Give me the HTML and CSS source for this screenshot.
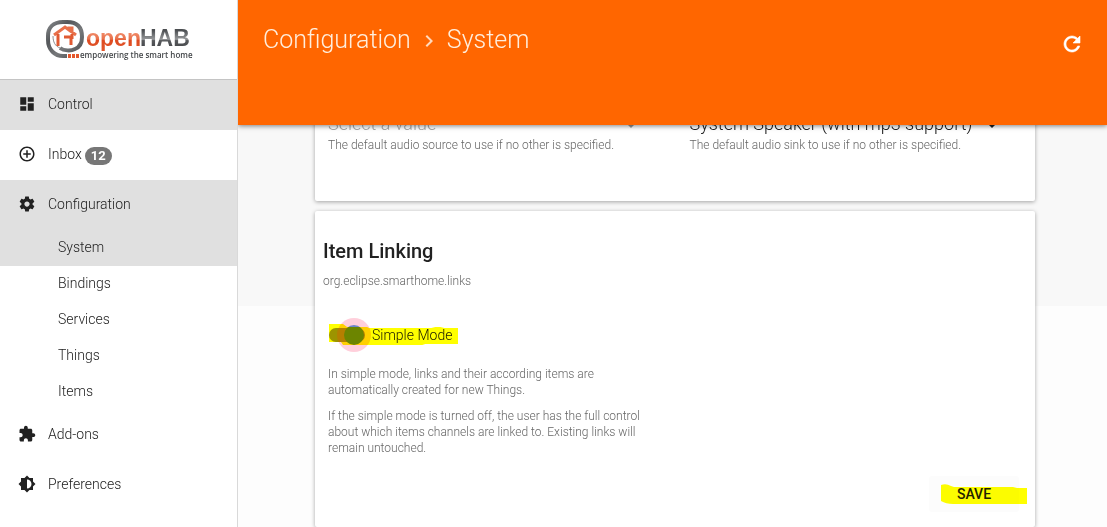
FILE: index.html
```html
<!DOCTYPE html>
<html lang="en">
<head>
<meta charset="utf-8">
<meta name="viewport" content="width=device-width, initial-scale=1">
<title>openHAB - Configuration</title>
<link rel="stylesheet" href="styles.css">
</head>
<body>
<div class="app">
  <aside class="sidebar">
    <a class="brand" href="#" aria-label="openHAB home">
      <svg class="brand-logo" viewBox="0 0 146 42" role="img" aria-label="openHAB">
        <defs>
          <linearGradient id="orange" x1="0" y1="0" x2="0" y2="1">
            <stop offset="0.3" stop-color="#f08a68"/><stop offset="0.55" stop-color="#e8704a"/><stop offset="0.58" stop-color="#de4a20"/><stop offset="1" stop-color="#e2572c"/>
          </linearGradient>
          <linearGradient id="grey" x1="0" y1="0" x2="0" y2="1">
            <stop offset="0.2" stop-color="#4b4e51"/><stop offset="0.55" stop-color="#96989a"/><stop offset="0.6" stop-color="#57595c"/><stop offset="1" stop-color="#3d4043"/>
          </linearGradient>
          <linearGradient id="ring" x1="0" y1="0" x2="1" y2="1">
            <stop offset="0" stop-color="#85888a"/><stop offset="0.3" stop-color="#54575a"/><stop offset="0.6" stop-color="#77797b"/><stop offset="1" stop-color="#4a4d50"/>
          </linearGradient>
        </defs>
        <path d="M14 29C18 32 25 32 29 30C34 28 36 23 36 18C36 8 31 3 21 3H17C7 3 2 9 2 17V21C2 31 9 37 17 37H21" fill="none" stroke="url(#ring)" stroke-width="4"/>
        <path d="M7 17C7 23 9 27 14 29" fill="none" stroke="#8b8d8f" stroke-width="1"/>
        <path d="M8 16L19 8L23 11V9H26V13L30 16" fill="none" stroke="#e8704a" stroke-width="3"/>
        <path d="M12 15V27M26 15V20M18 18H25V26" fill="none" stroke="#e05a32" stroke-width="3"/>
        <path d="M22 35h3v4h-3zM26 35h3v4h-3zM30 35h3v4h-3z" fill="#e4572c"/>
        <text class="logo-name" x="40" y="27" fill="url(#orange)">open</text>
        <text class="logo-name" x="94" y="27" fill="url(#grey)">HAB</text>
        <text class="logo-tag" x="34" y="39">empowering the smart home</text>
      </svg>
    </a>
    <nav class="menu" aria-label="Main">
      <a class="item active" href="#"><svg class="icon" viewBox="0 0 24 24"><path d="M3 13h8V3H3v10zm0 8h8v-6H3v6zm10 0h8V11h-8v10zm0-18v6h8V3h-8z"/></svg>Control</a>
      <a class="item" href="#"><svg class="icon" viewBox="0 0 24 24"><path d="M13 7h-2v4H7v2h4v4h2v-4h4v-2h-4V7zm-1-5C6.480 2 2 6.480 2 12s4.480 10 10 10 10-4.480 10-10S17.520 2 12 2zm0 18c-4.410 0-8-3.590-8-8s3.590-8 8-8 8 3.590 8 8-3.590 8-8 8z"/></svg>Inbox<span class="badge">12</span></a>
      <a class="item active" href="#"><svg class="icon" viewBox="0 0 24 24"><path d="M19.430 12.980c.04-.32.07-.64.07-.98s-.03-.66-.07-.98l2.110-1.650c.19-.15.24-.42.12-.64l-2-3.460c-.12-.22-.39-.3-.61-.22l-2.490 1c-.52-.4-1.080-.73-1.690-.98l-.38-2.650C14.460 2.180 14.250 2 14 2h-4c-.25 0-.46.18-.49.42l-.38 2.650c-.61.25-1.170.59-1.690.98l-2.490-1c-.23-.09-.49 0-.61.22l-2 3.460c-.13.22-.07.49.12.64l2.110 1.650c-.04.32-.07.65-.07.98s.03.66.07.98l-2.110 1.650c-.19.15-.24.42-.12.64l2 3.460c.12.22.39.3.61.22l2.490-1c.52.4 1.080.73 1.690.98l.38 2.650c.03.24.24.42.49.42h4c.25 0 .46-.18.49-.42l.38-2.650c.61-.25 1.170-.59 1.690-.98l2.490 1c.23.09.49 0 .61-.22l2-3.460c.12-.22.07-.49-.12-.64l-2.110-1.650zM12 15.500c-1.930 0-3.500-1.570-3.500-3.500s1.570-3.500 3.500-3.500 3.500 1.570 3.500 3.500-1.570 3.500-3.500 3.500z"/></svg>Configuration</a>
      <a class="subitem active" href="#" aria-current="page">System</a>
      <a class="subitem" href="#">Bindings</a>
      <a class="subitem" href="#">Services</a>
      <a class="subitem" href="#">Things</a>
      <a class="subitem" href="#">Items</a>
      <a class="item" href="#"><svg class="icon" viewBox="0 0 24 24"><path d="M20.500 11H19V7c0-1.100-.9-2-2-2h-4V3.500C13 2.120 11.880 1 10.500 1S8 2.120 8 3.500V5H4c-1.100 0-1.990.9-1.990 2v3.800H3.500c1.490 0 2.700 1.210 2.700 2.700s-1.210 2.700-2.700 2.700H2V20c0 1.100.9 2 2 2h3.800v-1.500c0-1.490 1.210-2.700 2.700-2.700 1.490 0 2.700 1.210 2.700 2.700V22H17c1.100 0 2-.9 2-2v-4h1.500c1.380 0 2.500-1.120 2.500-2.500S21.880 11 20.500 11z"/></svg>Add-ons</a>
      <a class="item" href="#"><svg class="icon" viewBox="0 0 24 24"><path d="M20 8.690V4h-4.690L12 .69 8.690 4H4v4.690L.69 12 4 15.310V20h4.690L12 23.310 15.310 20H20v-4.690L23.310 12 20 8.690zM12 18V6c3.310 0 6 2.690 6 6s-2.690 6-6 6z"/></svg>Preferences</a>
    </nav>
  </aside>
  <div class="page">
    <header class="toolbar">
      <h1 class="crumbs"><a href="#">Configuration</a><svg class="chevron" viewBox="0 0 24 24"><path d="M10 6L8.590 7.410 13.170 12l-4.580 4.590L10 18l6-6z"/></svg><span>System</span></h1>
      <button class="refresh" type="button" aria-label="Refresh"><svg viewBox="0 0 24 24"><path d="M17.650 6.350C16.200 4.900 14.210 4 12 4c-4.420 0-7.990 3.580-7.990 8s3.570 8 7.990 8c3.730 0 6.840-2.550 7.730-6h-2.080c-.82 2.330-3.040 4-5.650 4-3.310 0-6-2.690-6-6s2.690-6 6-6c1.660 0 3.140.69 4.220 1.780L13 11h7V4l-2.350 2.350z"/></svg></button>
    </header>
    <main class="content">
      <section class="card audio">
        <div class="field">
          <div class="picker"><select class="select placeholder" aria-label="Default source"><option>Select a value</option></select><svg class="arrow placeholder" viewBox="0 0 10 5"><path d="M0 0h10L5 5z"/></svg></div>
          <p class="hint">The default audio source to use if no other is specified.</p>
        </div>
        <div class="field">
          <div class="picker"><select class="select" aria-label="Default sink"><option>System Speaker (with mp3 support)</option></select><svg class="arrow" viewBox="0 0 10 5"><path d="M0 0h10L5 5z"/></svg></div>
          <p class="hint">The default audio sink to use if no other is specified.</p>
        </div>
      </section>
      <section class="card linking">
        <h2 class="title">Item Linking</h2>
        <p class="hint">org.eclipse.smarthome.links</p>
        <div class="setting">
          <label class="toggle"><input class="switch" type="checkbox" checked>Simple Mode
            <svg class="marker" viewBox="0 0 129 22" preserveAspectRatio="none"><path d="M0 0H14L18 3H38L40 4H102L106 3H111L115 4H129V20H96L93 21H14L12 18H0z"/></svg>
          </label>
          <p class="hint">In simple mode, links and their according items are automatically created for new Things.</p>
          <p class="hint">If the simple mode is turned off, the user has the full control about which items channels are linked to. Existing links will remain untouched.</p>
        </div>
        <div class="actions">
          <button class="save" type="button">SAVE<svg class="marker" viewBox="0 0 86 20" preserveAspectRatio="none"><path d="M0 1Q5-1 10 2L13 3H72L76 4H86V20H12Q5 20 0 17z"/></svg></button>
        </div>
      </section>
    </main>
  </div>
</div>
</body>
</html>
```
FILE: styles.css
```css
* { box-sizing: border-box; }

body {
  margin: 0;
  font-family: Roboto, "Liberation Sans", sans-serif;
  font-size: 14px;
  font-weight: 300;
  color: #212121;
  background: #fdfdfd;
}

a { color: inherit; text-decoration: none; }
h1, h2, p { margin: 0; }

.app { display: flex; height: 100vh; overflow: hidden; }

.sidebar {
  position: relative;
  z-index: 3;
  flex: 0 0 238px;
  border-right: 1px solid #d9d9d9;
  background: #fff;
}

.brand {
  display: flex;
  justify-content: center;
  height: 80px;
  padding-top: 19px;
  border-bottom: 1px solid #c4c4c4;
}
.brand-logo { width: 146px; height: 42px; overflow: visible; }
.logo-name { font: bold 23px "Liberation Sans", sans-serif; }
.logo-tag { font: 600 8px "Open Sans", sans-serif; fill: #44474a; }

.menu { display: flex; flex-direction: column; }
.item {
  display: flex;
  align-items: center;
  height: 50px;
  padding: 0 18px 2px;
}
.icon { width: 18px; height: 18px; margin-right: 12px; fill: #212121; }
.subitem { height: 36px; padding-left: 58px; line-height: 34px; }
.active { background: #e0e0e0; }
.badge {
  margin: 3px 0 0 3px;
  padding: 0 6px;
  border-radius: 9px;
  background: #777;
  color: #fff;
  font-size: 13px;
  font-weight: 700;
  line-height: 18px;
}

.page {
  flex: 1;
  display: flex;
  flex-direction: column;
  min-width: 0;
  background: linear-gradient(#f8f8f8 306px, #fdfdfd 306px);
}
.toolbar {
  position: relative;
  z-index: 2;
  flex: 0 0 125px;
  display: flex;
  justify-content: space-between;
  align-items: flex-start;
  padding: 24px 23px 0 25px;
  background: #f60;
  color: #fff;
  box-shadow: 0 1px 5px rgba(0, 0, 0, .5);
}
.crumbs { display: flex; align-items: center; font-size: 25px; font-weight: 300; line-height: 32px; color: #ffeedd; }
.chevron { width: 24px; height: 24px; margin: 2px 6px 0; fill: #ffd9bd; }
.refresh {
  width: 24px;
  height: 24px;
  margin-top: 8px;
  padding: 0;
  border: 0;
  background: none;
  color: #fff;
}
.refresh svg { display: block; fill: currentColor; stroke: currentColor; stroke-width: .6px; }

.content {
  flex: 1;
  display: flex;
  flex-direction: column;
  gap: 10px;
  margin-top: -16px;
  padding: 0 72px 0 77px;
}
.card {
  border-radius: 2px;
  background: #fff;
  box-shadow: 0 1px 4px rgba(0, 0, 0, .35);
}
.audio {
  display: grid;
  grid-template-columns: 1fr 1fr;
  column-gap: 16px;
  padding: 0 0 48px 13px;
}
.field { padding-right: 30px; }
.picker { display: flex; align-items: center; }
.select {
  flex: 1;
  min-width: 0;
  height: 28px;
  padding: 0;
  border: 0;
  appearance: none;
  background: none;
  color: #212121;
  font-family: inherit;
  font-size: 18px;
  font-weight: 300;
}
.arrow { width: 10px; height: 5px; margin: 4px 8px 0 0; fill: #212121; }
.select.placeholder { color: #aaa; }
.arrow.placeholder { fill: #999; }
.hint { color: #666; font-size: 12px; line-height: 16px; }

.linking { flex: 1; padding: 28px 8px 0; }
.title { margin-bottom: 10px; font-size: 20px; font-weight: 500; line-height: 24px; }
.setting { display: flex; flex-direction: column; align-items: flex-start; gap: 10px; max-width: 325px; padding: 35px 0 0 5px; }
.toggle {
  position: relative;
  display: flex;
  align-items: center;
  height: 22px;
  margin: 0 0 10px 1px;
  padding-right: 6px;
}
.switch {
  position: relative;
  width: 36px;
  height: 14px;
  margin: 0 7px 0 0;
  border-radius: 7px;
  appearance: none;
  background: #9c9440;
}
.switch::before {
  content: "";
  position: absolute;
  top: -3px;
  right: 1px;
  width: 20px;
  height: 20px;
  border-radius: 50%;
  background: #6c85c8;
  box-shadow: 0 0 0 7px rgba(255, 64, 110, .25);
}
.marker {
  position: absolute;
  inset: 0;
  width: 100%;
  height: 100%;
  fill: #ff0;
  mix-blend-mode: multiply;
  pointer-events: none;
}
.actions { display: flex; justify-content: flex-end; padding: 20px 8px 0 0; }
.save {
  position: relative;
  width: 90px;
  height: 36px;
  border: 0;
  border-radius: 3px;
  background: #fcfcfc;
  color: #212121;
  font: 500 14px Roboto, sans-serif;
}
.save .marker { inset: 8px -8px 8px 12px; width: 86px; height: 20px; }
```
